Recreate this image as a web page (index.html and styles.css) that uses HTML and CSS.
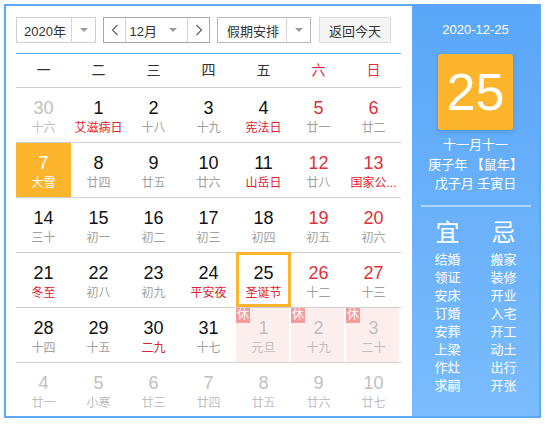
FILE: index.html
```html
<!DOCTYPE html>
<html lang="zh-CN">
<head>
<meta charset="utf-8">
<title>万年历</title>
<link rel="stylesheet" href="styles.css">
</head>
<body>
<div class="cal">
  <div class="main">
    <div class="toolbar">
      <div class="sel sel-year"><span class="sel-text">2020年</span><span class="sel-arrow"><i class="tri"></i></span></div>
      <div class="sel sel-month">
        <span class="nav"><svg width="8" height="12" viewBox="0 0 8 12"><path d="M6.5 1 L1.5 6 L6.5 11" fill="none" stroke="#666" stroke-width="1.3"/></svg></span>
        <span class="month-mid"><span class="month-text">12月</span><i class="tri"></i></span>
        <span class="nav"><svg width="8" height="12" viewBox="0 0 8 12"><path d="M1.5 1 L6.5 6 L1.5 11" fill="none" stroke="#666" stroke-width="1.3"/></svg></span>
      </div>
      <div class="sel sel-holiday"><span class="sel-text">假期安排</span><span class="sel-arrow"><i class="tri"></i></span></div>
      <div class="btn">返回今天</div>
    </div>
    <div class="week">
      <span>一</span><span>二</span><span>三</span><span>四</span><span>五</span><span class="red">六</span><span class="red">日</span>
    </div>
    <div class="days">
      <div class="cell other"><b>30</b><em>十六</em></div>
      <div class="cell"><b>1</b><em class="fest">艾滋病日</em></div>
      <div class="cell"><b>2</b><em>十八</em></div>
      <div class="cell"><b>3</b><em>十九</em></div>
      <div class="cell"><b>4</b><em class="fest">宪法日</em></div>
      <div class="cell wkend"><b>5</b><em>廿一</em></div>
      <div class="cell wkend"><b>6</b><em>廿二</em></div>

      <div class="cell selected"><b>7</b><em>大雪</em></div>
      <div class="cell"><b>8</b><em>廿四</em></div>
      <div class="cell"><b>9</b><em>廿五</em></div>
      <div class="cell"><b>10</b><em>廿六</em></div>
      <div class="cell"><b>11</b><em class="fest">山岳日</em></div>
      <div class="cell wkend"><b>12</b><em>廿八</em></div>
      <div class="cell wkend"><b>13</b><em class="fest">国家公...</em></div>

      <div class="cell"><b>14</b><em>三十</em></div>
      <div class="cell"><b>15</b><em>初一</em></div>
      <div class="cell"><b>16</b><em>初二</em></div>
      <div class="cell"><b>17</b><em>初三</em></div>
      <div class="cell"><b>18</b><em>初四</em></div>
      <div class="cell wkend"><b>19</b><em>初五</em></div>
      <div class="cell wkend"><b>20</b><em>初六</em></div>

      <div class="cell"><b>21</b><em class="fest">冬至</em></div>
      <div class="cell"><b>22</b><em>初八</em></div>
      <div class="cell"><b>23</b><em>初九</em></div>
      <div class="cell"><b>24</b><em class="fest">平安夜</em></div>
      <div class="cell today"><b>25</b><em class="fest">圣诞节</em></div>
      <div class="cell wkend"><b>26</b><em>十二</em></div>
      <div class="cell wkend"><b>27</b><em>十三</em></div>

      <div class="cell"><b>28</b><em>十四</em></div>
      <div class="cell"><b>29</b><em>十五</em></div>
      <div class="cell"><b>30</b><em class="fest">二九</em></div>
      <div class="cell"><b>31</b><em>十七</em></div>
      <div class="cell other rest"><span class="badge">休</span><b>1</b><em>元旦</em></div>
      <div class="cell other rest"><span class="badge">休</span><b>2</b><em>十九</em></div>
      <div class="cell other rest"><span class="badge">休</span><b>3</b><em>二十</em></div>

      <div class="cell other"><b>4</b><em>廿一</em></div>
      <div class="cell other"><b>5</b><em>小寒</em></div>
      <div class="cell other"><b>6</b><em>廿三</em></div>
      <div class="cell other"><b>7</b><em>廿四</em></div>
      <div class="cell other"><b>8</b><em>廿五</em></div>
      <div class="cell other"><b>9</b><em>廿六</em></div>
      <div class="cell other"><b>10</b><em>廿七</em></div>
    </div>
  </div>
  <div class="side">
    <div class="side-date">2020-12-25</div>
    <div class="big-day">25</div>
    <div class="lunar">
      <div>十一月十一</div>
      <div>庚子年 【鼠年】</div>
      <div>戊子月 壬寅日</div>
    </div>
    <div class="divider"></div>
    <div class="yiji">
      <div class="col">
        <div class="yj-title">宜</div>
        <div>结婚</div><div>领证</div><div>安床</div><div>订婚</div><div>安葬</div><div>上梁</div><div>作灶</div><div>求嗣</div>
      </div>
      <div class="col">
        <div class="yj-title">忌</div>
        <div>搬家</div><div>装修</div><div>开业</div><div>入宅</div><div>开工</div><div>动土</div><div>出行</div><div>开张</div>
      </div>
    </div>
  </div>
</div>
</body>
</html>
```
FILE: styles.css
```css
html, body {
  margin: 0;
  padding: 0;
  background: #fff;
}
body {
  font-family: "Liberation Sans", "Noto Sans CJK SC", Arial, sans-serif;
  color: #333;
}
.cal {
  margin: 4px;
  width: 533px;
  height: 410px;
  border: 2px solid #5ea9f6;
  display: flex;
}
.main {
  width: 385px;
  padding: 11px 11px 0 10px;
}
.toolbar {
  display: flex;
  height: 26px;
  font-size: 13px;
}
.sel {
  display: flex;
  box-sizing: border-box;
  height: 26px;
  border: 1px solid #cfcfcf;
  align-items: stretch;
}
.sel-year { width: 80px; margin-right: 7px; }
.sel-month { width: 107px; margin-right: 7px; border-color: #a8a8a8; }
.sel-holiday { width: 94px; margin-right: 8px; border-color: #b8b8b8; }
.sel-text {
  flex: 1;
  display: flex;
  align-items: center;
  justify-content: center;
  padding-left: 2px;
}
.sel-arrow {
  width: 23px;
  border-left: 1px solid #d6d6d6;
  display: flex;
  align-items: center;
  justify-content: center;
}
.tri {
  display: block;
  width: 0;
  height: 0;
  border-left: 4px solid transparent;
  border-right: 4px solid transparent;
  border-top: 4px solid #9a9a9a;
}
.nav {
  width: 21px;
  display: flex;
  align-items: center;
  justify-content: center;
}
.month-mid {
  flex: 1;
  border-left: 1px solid #d6d6d6;
  border-right: 1px solid #d6d6d6;
  display: flex;
  align-items: center;
  justify-content: flex-end;
  padding-right: 10px;
}
.month-text { margin-right: 12px; }
.btn {
  box-sizing: border-box;
  width: 72px;
  height: 26px;
  border: 1px solid #dcdcdc;
  background: #f5f5f5;
  display: flex;
  align-items: center;
  justify-content: center;
}
.week {
  margin-top: 10px;
  border-top: 1px solid #5ea9f6;
  height: 33px;
  display: grid;
  grid-template-columns: repeat(7, 55px);
  font-size: 14px;
  line-height: 33px;
  text-align: center;
  color: #333;
}
.week .red { color: #e0303a; }
.days {
  display: grid;
  grid-template-columns: repeat(7, 55px);
  grid-auto-rows: 55px;
}
.cell {
  position: relative;
  box-sizing: border-box;
  border-top: 1px solid #d0d0d0;
  padding-top: 9px;
  text-align: center;
}
.cell b {
  display: block;
  font-weight: normal;
  font-size: 18px;
  line-height: 22px;
  color: #111;
}
.cell em {
  display: block;
  font-style: normal;
  font-size: 12px;
  line-height: 18px;
  color: #a0a0a0;
  white-space: nowrap;
}
.cell em.fest { color: #e0222e; }
.cell.wkend b { color: #e0303a; }
.cell.other b, .cell.other em { color: #c0c0c0; }
.cell.selected {
  background: #fcb52c;
}
.cell.selected b, .cell.selected em { color: #fff; }
.cell.today {
  border: 3px solid #fcb52c;
  padding-top: 7px;
}
.cell.rest {
  background: #fdeeee;
  box-shadow: inset -2px 0 #fff;
}
.badge {
  position: absolute;
  top: 0;
  left: 0;
  width: 14px;
  height: 15px;
  background: #f59c9c;
  color: #fff;
  font-size: 12px;
  line-height: 15px;
  text-align: center;
}
.side {
  width: 127px;
  margin-top: -1px;
  background: linear-gradient(#5aa6f8, #7abcfd);
  color: #fff;
  text-align: center;
}
.side-date {
  padding-top: 17px;
  font-size: 13px;
  line-height: 16px;
}
.big-day {
  width: 75px;
  height: 76px;
  margin: 16px auto 0;
  background: #fcb52c;
  border-radius: 3px;
  box-shadow: 0 2px 4px rgba(40, 80, 140, 0.25);
  font-size: 52px;
  line-height: 76px;
}
.lunar {
  margin-top: 5px;
  font-size: 13px;
  line-height: 19.5px;
}
.divider {
  width: 110px;
  height: 2px;
  margin: 11px auto 0;
  background: rgba(255, 255, 255, 0.45);
}
.yiji {
  display: flex;
  justify-content: center;
  margin-top: 12px;
  font-size: 13px;
  line-height: 18px;
}
.col { width: 56px; }
.yj-title {
  font-size: 24px;
  line-height: 28px;
  margin-bottom: 4px;
}
```
